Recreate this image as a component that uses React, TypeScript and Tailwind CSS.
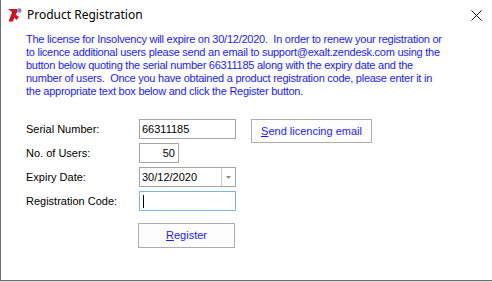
import React from 'react';

const font = { fontFamily: '"Liberation Sans", Arial, sans-serif' };

const AppIcon = () => (
  <svg width="14" height="14" viewBox="0 0 14 14" className="shrink-0">
    <path d="M0 1 H9 L9 5 L5 5 Z" fill="#d4161c" />
    <path d="M4.5 3 L9 3 L5 13.5 L0.5 13.5 Z" fill="#c8141a" />
    <path d="M6 5.5 L11 9 L8.5 12 L5 8 Z" fill="#d4161c" />
    <circle cx="11.3" cy="2.5" r="2.3" fill="#7a86d8" />
  </svg>
);

const lines = [
  'The license for Insolvency will expire on 30/12/2020.\u00a0 In order to renew your registration or',
  'to licence additional users please send an email to support@exalt.zendesk.com using the',
  'button below quoting the serial number 66311185 along with the expiry date and the',
  'number of users.\u00a0 Once you have obtained a product registration code, please enter it in',
  'the appropriate text box below and click the Register button.',
];

export default function App() {
  return (
    <div className="w-[492px] h-[282px] bg-[#d9d9d9] overflow-hidden" style={font}>
      <div className="h-[281px] bg-white border-l border-b border-[#6f6f6f] flex flex-col">
        {/* Title bar */}
        <div className="h-[30px] flex items-center pl-[7px] pr-[10px]">
          <AppIcon />
          <span className="ml-[5px] text-[12px] text-black" style={{ fontFamily: '"Noto Sans", "Liberation Sans", sans-serif' }}>
            Product Registration
          </span>
          <svg width="11" height="11" viewBox="0 0 11 11" className="ml-auto">
            <path d="M0.5 0.5 L10.5 10.5 M10.5 0.5 L0.5 10.5" stroke="#111" strokeWidth="1" />
          </svg>
        </div>

        {/* Message */}
        <div className="mt-[3px] pl-[25px] text-[11px] leading-[13px] text-[#1a1aff] tracking-[-0.25px]">
          {lines.map((l) => (
            <div key={l} className="whitespace-nowrap">{l}</div>
          ))}
        </div>

        {/* Form */}
        <div className="mt-[21px] pl-[25px] grid grid-cols-[113px_97px_15px_121px] grid-rows-[20px_20px_20px_20px] gap-y-[4px] text-[11px] text-black">
          <div className="flex items-center">Serial Number:</div>
          <div className="border border-[#a5a5a5] flex items-center px-[2px]">66311185</div>
          <div />
          <div className="h-[24px] border border-[#adadad] bg-[#fdfdfd] flex items-center justify-center text-[#1a1aff]">
            <span><span className="underline">S</span>end licencing email</span>
          </div>

          <div className="flex items-center">No. of Users:</div>
          <div className="w-[40px] border border-[#a5a5a5] flex items-center justify-end px-[3px]">50</div>
          <div />
          <div />

          <div className="flex items-center">Expiry Date:</div>
          <div className="border border-[#a5a5a5] flex items-center">
            <span className="pl-[2px] flex-1">30/12/2020</span>
            <div className="w-[14px] h-full border-l border-[#c8c8c8] flex items-center justify-center">
              <svg width="5" height="3" viewBox="0 0 5 3"><path d="M0 0 H5 L2.5 3 Z" fill="#888" /></svg>
            </div>
          </div>
          <div />
          <div />

          <div className="flex items-center">Registration Code:</div>
          <div className="border border-[#7eb4ea] flex items-center pl-[3px]">
            <div className="w-px h-[13px] bg-black" />
          </div>
          <div />
          <div />
        </div>

        <div className="mt-[12px] ml-[137px] w-[97px] h-[25px] border border-[#adadad] bg-[#fdfdfd] flex items-center justify-center text-[11px] text-[#1a1aff]">
          <span><span className="underline">R</span>egister</span>
        </div>
      </div>
    </div>
  );
}
